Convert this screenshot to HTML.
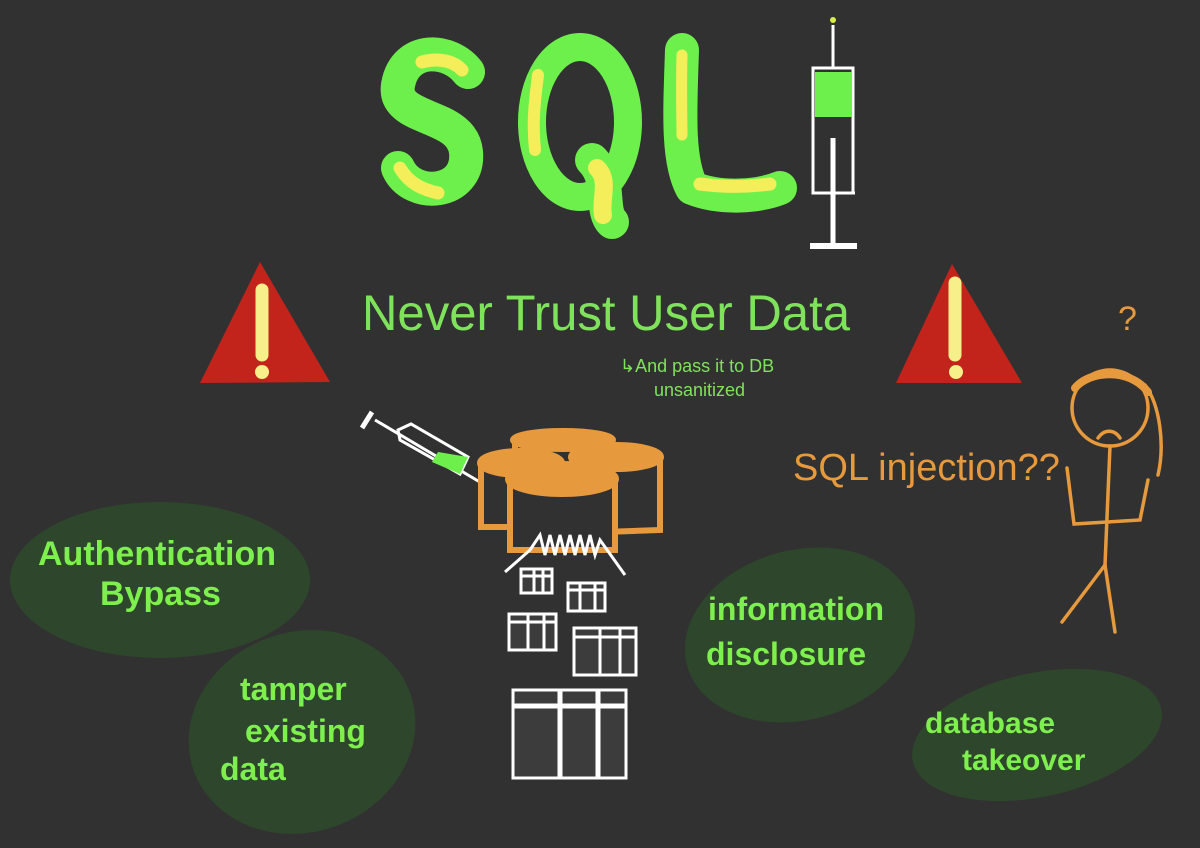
<!DOCTYPE html>
<html><head><meta charset="utf-8"><style>
html,body{margin:0;padding:0;background:#313131;}
svg{display:block}
text{font-family:"Liberation Sans",sans-serif}
</style></head><body>
<svg width="1200" height="848" viewBox="0 0 1200 848" xmlns="http://www.w3.org/2000/svg">
<rect width="1200" height="848" fill="#313131"/>
<g fill="#2e462b">
<ellipse cx="160" cy="580" rx="150" ry="78"/>
<ellipse cx="302" cy="732" rx="115" ry="100" transform="rotate(-20 302 732)"/>
<ellipse cx="800" cy="635" rx="117" ry="85" transform="rotate(-15 800 635)"/>
<ellipse cx="1037" cy="735" rx="127" ry="62" transform="rotate(-12 1037 735)"/>
</g>
<!-- SQL -->
<g fill="none" stroke-linecap="round" stroke-linejoin="round">
<path d="M468 72 C450 48 405 45 398 85 C392 122 462 112 466 152 C470 195 412 200 398 168" stroke="#6ef04c" stroke-width="34"/>
<path d="M422 62 C440 57 455 62 462 70" stroke="#f3ee5a" stroke-width="13"/>
<path d="M400 168 C410 185 425 190 438 193" stroke="#f3ee5a" stroke-width="13"/>
<ellipse cx="580" cy="122" rx="48" ry="75" stroke="#6ef04c" stroke-width="28"/>
<path d="M592 160 C612 180 600 210 612 222" stroke="#6ef04c" stroke-width="34"/>
<path d="M538 75 C535 100 532 120 535 150" stroke="#f3ee5a" stroke-width="12"/>
<path d="M597 168 C610 180 600 200 603 215" stroke="#f3ee5a" stroke-width="18"/>
<path d="M682 50 C680 110 677 160 692 188 C722 200 760 196 780 188" stroke="#6ef04c" stroke-width="34"/>
<path d="M682 55 C681 90 682 120 682 135" stroke="#f3ee5a" stroke-width="11"/>
<path d="M700 184 C730 188 755 186 770 184" stroke="#f3ee5a" stroke-width="13"/>
</g>
<!-- syringe -->
<g stroke="#fff" fill="none" stroke-width="3">
<line x1="833" y1="25" x2="833" y2="68"/>
<rect x="813" y="68" width="40" height="125"/>
<rect x="815" y="72" width="37" height="45" fill="#6ef04c" stroke="none"/>
<line x1="833" y1="138" x2="833" y2="245" stroke-width="5"/>
<line x1="810" y1="246" x2="857" y2="246" stroke-width="6"/>
<line x1="812" y1="193" x2="855" y2="193"/>
</g>
<circle cx="833" cy="20" r="3" fill="#d9ee44"/>
<!-- warnings -->
<path d="M260 262 L330 382 L200 383 Z" fill="#c2241b"/>
<path d="M952 264 L1022 383 L896 383 Z" fill="#c2241b"/>
<g stroke="#f6ef8a" stroke-linecap="round">
<line x1="262" y1="290" x2="262" y2="355" stroke-width="13"/>
<line x1="955" y1="283" x2="955" y2="355" stroke-width="13"/>
</g>
<circle cx="262" cy="372" r="7" fill="#f6ef8a"/><circle cx="956" cy="372" r="7" fill="#f6ef8a"/>
<text x="362" y="330" font-size="50" fill="#7ee35a" textLength="488" lengthAdjust="spacingAndGlyphs">Never Trust User Data</text>
<text x="620" y="372" font-size="18" fill="#7ee35a">↳And pass it to DB</text>
<text x="654" y="396" font-size="18" fill="#7ee35a">unsanitized</text>
<!-- db syringe -->
<g stroke="#fff" stroke-width="3" fill="none">
<line x1="375" y1="420" x2="490" y2="488"/>
<line x1="362" y1="428" x2="372" y2="412" stroke-width="5"/>
<path d="M398 430 L411 424 L468 457 L460 474 L400 440 Z"/>
</g>
<path d="M438 452 L468 457 L460 474 L432 462 Z" fill="#6ef04c"/>
<!-- databases -->
<g stroke="#e79a3d" stroke-width="6" fill="#313131">
<path d="M515 440 L515 520 L612 520 L612 440"/>
<ellipse cx="563" cy="440" rx="50" ry="9" fill="#e79a3d"/>
<path d="M572 458 L575 533 L660 530 L660 458"/>
<ellipse cx="616" cy="457" rx="45" ry="12" fill="#e79a3d"/>
<path d="M481 462 L481 527 L560 527 L560 462"/>
<ellipse cx="521" cy="463" rx="41" ry="12" fill="#e79a3d"/>
<path d="M510 480 L510 550 L615 550 L615 480"/>
<ellipse cx="562" cy="479" rx="54" ry="15" fill="#e79a3d"/>
</g>
<path d="M505 572 L530 550 L540 535 L545 555 L550 535 L555 555 L560 535 L565 555 L570 535 L575 555 L580 535 L585 555 L590 535 L595 555 L600 540 L625 575" stroke="#fff" stroke-width="3" fill="none"/>
<g stroke="#fff" stroke-width="3" fill="#3c3c3c">
<rect x="521" y="569" width="31" height="24"/><rect x="568" y="583" width="37" height="28"/>
<rect x="509" y="614" width="47" height="36"/><rect x="574" y="628" width="62" height="47"/>
<rect x="513" y="690" width="113" height="88"/>
</g>
<g stroke="#fff" stroke-width="3">
<line x1="521" y1="576" x2="552" y2="576"/><line x1="534" y1="569" x2="534" y2="593"/><line x1="543" y1="569" x2="543" y2="593"/>
<line x1="568" y1="590" x2="605" y2="590"/><line x1="580" y1="583" x2="580" y2="611"/><line x1="595" y1="583" x2="595" y2="611"/>
<line x1="509" y1="622" x2="556" y2="622"/><line x1="528" y1="614" x2="528" y2="650"/><line x1="544" y1="614" x2="544" y2="650"/>
<line x1="574" y1="637" x2="636" y2="637"/><line x1="600" y1="628" x2="600" y2="675"/><line x1="620" y1="628" x2="620" y2="675"/>
<line x1="513" y1="706" x2="626" y2="706" stroke-width="5"/><line x1="560" y1="690" x2="560" y2="778" stroke-width="5"/><line x1="598" y1="690" x2="598" y2="778" stroke-width="5"/>
</g>
<g fill="#7ef04e" font-weight="bold">
<text x="38" y="565" font-size="34">Authentication</text>
<text x="100" y="605" font-size="34">Bypass</text>
<text x="240" y="700" font-size="32">tamper</text>
<text x="245" y="742" font-size="32">existing</text>
<text x="220" y="780" font-size="32">data</text>
<text x="708" y="620" font-size="32">information</text>
<text x="706" y="665" font-size="32">disclosure</text>
<text x="925" y="733" font-size="30">database</text>
<text x="962" y="770" font-size="30">takeover</text>
</g>
<text x="793" y="480" font-size="38" fill="#e79a3d">SQL injection??</text>
<text x="1118" y="330" font-size="34" fill="#e79a3d">?</text>
<g stroke="#e79a3d" stroke-width="3.5" fill="none" stroke-linecap="round">
<circle cx="1110" cy="408" r="38"/>
<path d="M1075 388 C1090 370 1130 368 1148 392" stroke-width="8"/>
<path d="M1145 385 C1160 405 1165 445 1158 475"/>
<path d="M1098 438 C1105 428 1115 430 1120 438"/>
<line x1="1110" y1="446" x2="1105" y2="565"/>
<path d="M1067 468 L1074 524 L1140 520 L1148 480"/>
<line x1="1105" y1="565" x2="1062" y2="622"/><line x1="1105" y1="565" x2="1115" y2="632"/>
</g>
</svg>
</body></html>
